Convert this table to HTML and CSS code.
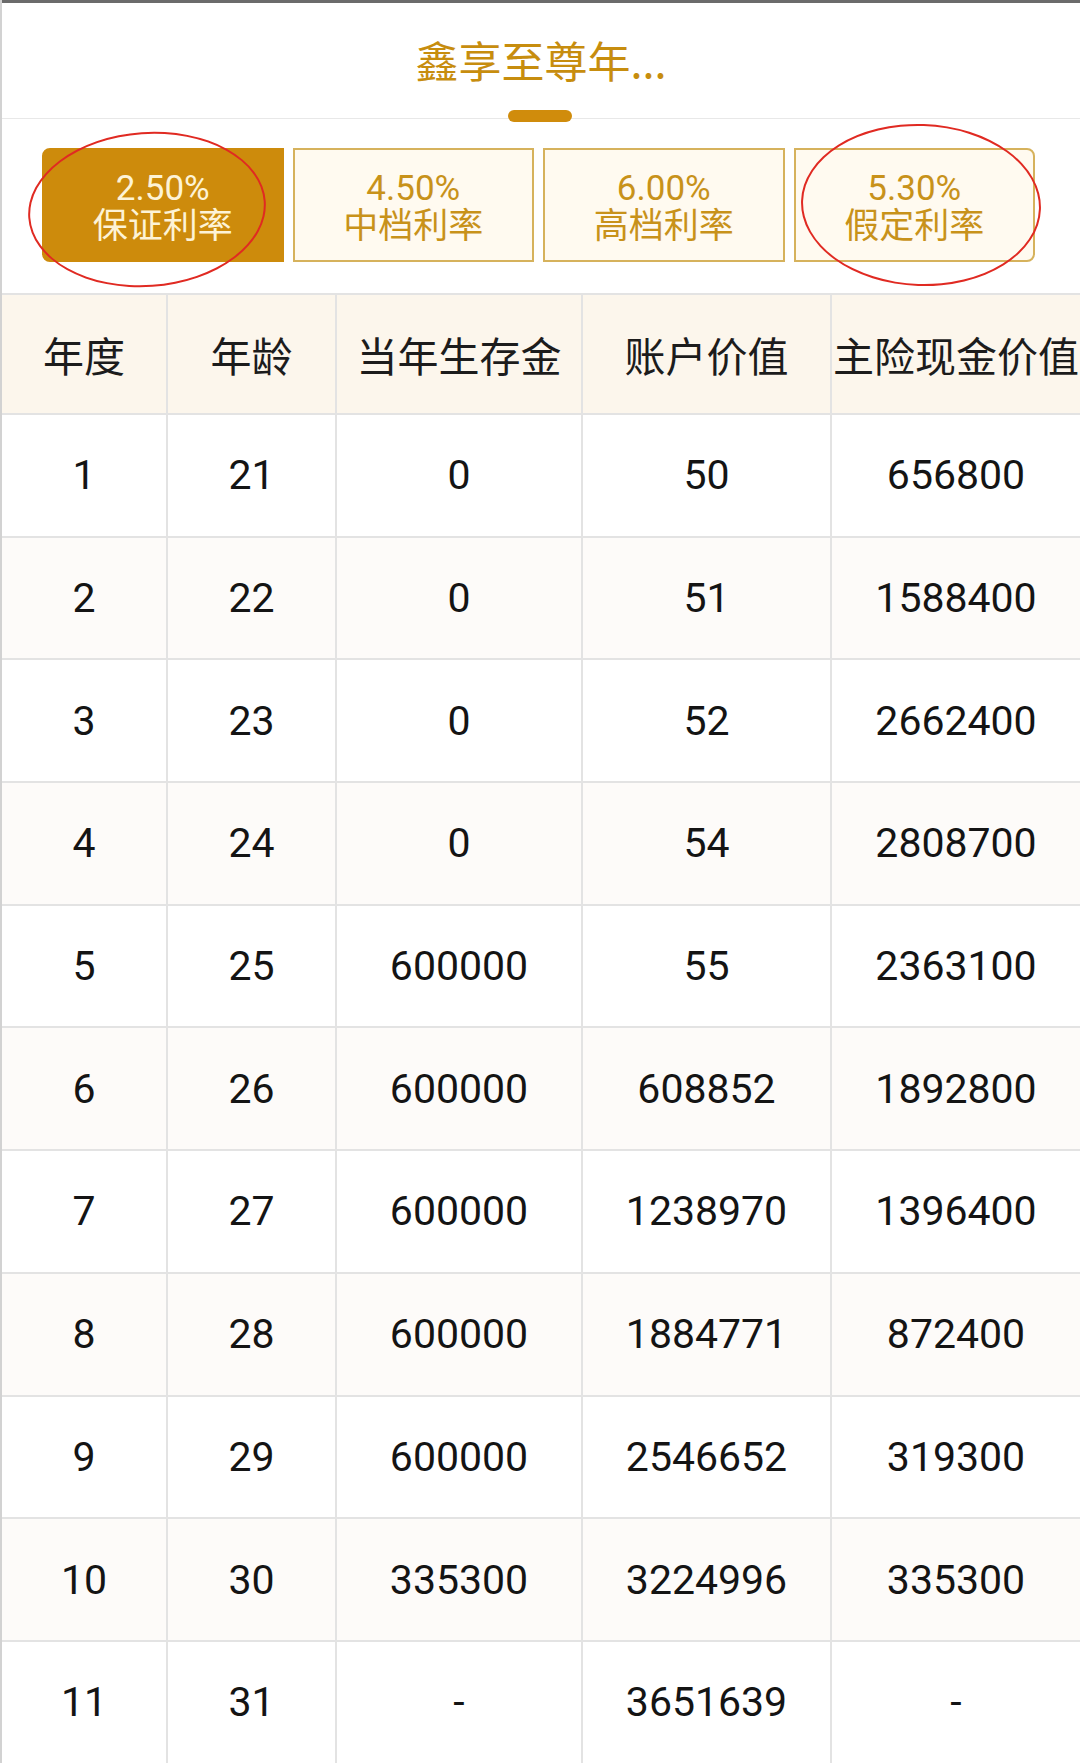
FILE: index.html
```html
<!DOCTYPE html>
<html lang="zh-CN">
<head>
<meta charset="utf-8">
<title>鑫享至尊年金</title>
<link rel="stylesheet" href="styles.css">
</head>
<body>
<div class="page">
  <div class="topbar"></div>
  <header class="head">
    <h1 class="title">鑫享至尊年...</h1>
    <span class="indicator"></span>
  </header>
  <section class="tabs">
    <div class="tab active"><span class="rate">2.50%</span><span class="label">保证利率</span></div>
    <div class="tab"><span class="rate">4.50%</span><span class="label">中档利率</span></div>
    <div class="tab"><span class="rate">6.00%</span><span class="label">高档利率</span></div>
    <div class="tab last"><span class="rate">5.30%</span><span class="label">假定利率</span></div>
    <span class="mark mark-1"></span>
    <span class="mark mark-2"></span>
  </section>
  <table class="grid">
    <colgroup>
      <col class="c1"><col class="c2"><col class="c3"><col class="c4"><col class="c5">
    </colgroup>
    <thead>
      <tr><th>年度</th><th>年龄</th><th>当年生存金</th><th>账户价值</th><th>主险现金价值</th></tr>
    </thead>
    <tbody>
      <tr><td>1</td><td>21</td><td>0</td><td>50</td><td>656800</td></tr>
      <tr><td>2</td><td>22</td><td>0</td><td>51</td><td>1588400</td></tr>
      <tr><td>3</td><td>23</td><td>0</td><td>52</td><td>2662400</td></tr>
      <tr><td>4</td><td>24</td><td>0</td><td>54</td><td>2808700</td></tr>
      <tr><td>5</td><td>25</td><td>600000</td><td>55</td><td>2363100</td></tr>
      <tr><td>6</td><td>26</td><td>600000</td><td>608852</td><td>1892800</td></tr>
      <tr><td>7</td><td>27</td><td>600000</td><td>1238970</td><td>1396400</td></tr>
      <tr><td>8</td><td>28</td><td>600000</td><td>1884771</td><td>872400</td></tr>
      <tr><td>9</td><td>29</td><td>600000</td><td>2546652</td><td>319300</td></tr>
      <tr><td>10</td><td>30</td><td>335300</td><td>3224996</td><td>335300</td></tr>
      <tr><td>11</td><td>31</td><td>-</td><td>3651639</td><td>-</td></tr>
    </tbody>
  </table>
</div>
</body>
</html>
```

FILE: styles.css
```css
html, body {
  margin: 0;
  padding: 0;
  background: #ffffff;
  overflow: hidden;
}

body {
  width: 1080px;
  height: 1763px;
  font-family: Roboto, "Noto Sans CJK SC", sans-serif;
}

.page {
  width: 1080px;
  box-sizing: border-box;
  border-left: 2px solid #d2d2d2;
}

.topbar {
  height: 3px;
  background: #6b6b6b;
}

.head {
  position: relative;
  height: 116px;
  box-sizing: border-box;
  padding-top: 30px;
  border-bottom: 1px solid #e8e8e8;
  text-align: center;
}

.title {
  margin: 0;
  font-family: "Noto Sans CJK SC", sans-serif;
  font-weight: 400;
  font-size: 43px;
  line-height: 52px;
  color: #c78d0e;
}

.indicator {
  position: absolute;
  left: 506px;
  bottom: -4px;
  width: 64px;
  height: 12px;
  border-radius: 6px;
  background: #d08c0c;
}

.tabs {
  position: relative;
  display: grid;
  grid-template-columns: repeat(4, 1fr);
  gap: 9px;
  padding: 29px 45px 31px 40px;
  height: 174px;
  box-sizing: border-box;
}

.tab {
  display: flex;
  flex-direction: column;
  align-items: center;
  justify-content: center;
  padding-top: 6px;
  box-sizing: border-box;
  background: #fffaf0;
  border: 2px solid #d6b25c;
  color: #c8921a;
  font-family: Roboto, "Noto Sans CJK SC", sans-serif;
  font-size: 35px;
  line-height: 38px;
}

.tab.active {
  background: #cd8b0c;
  border-color: #cd8b0c;
  color: #fdf3d6;
  border-radius: 8px 0 0 8px;
}

.tab.last {
  border-radius: 0 8px 8px 0;
}

.mark {
  position: absolute;
  border: 2px solid #e02a22;
  border-radius: 50%;
  box-sizing: border-box;
}

.mark-1 {
  left: 26px;
  top: 13px;
  width: 238px;
  height: 155px;
  transform: rotate(-4deg);
}

.mark-2 {
  left: 799px;
  top: 5px;
  width: 240px;
  height: 162px;
  transform: rotate(2deg);
}

.grid {
  width: 1078px;
  border-collapse: collapse;
  table-layout: fixed;
  color: #141414;
}

.c1 { width: 165px; }
.c2 { width: 169px; }
.c3 { width: 246px; }
.c4 { width: 249px; }
.c5 { width: 249px; }

.grid th,
.grid td {
  border: 2px solid #e3e3e3;
  padding: 0;
  text-align: center;
  white-space: nowrap;
  font-size: 41px;
}

.grid tr > :first-child {
  border-left: none;
}

.grid tr > :last-child {
  border-right: none;
}

.grid th {
  height: 118px;
  background: #fcf6ec;
  font-weight: 400;
  font-family: "Noto Sans CJK SC", sans-serif;
  color: #1c1c1c;
}

.grid td {
  height: 120.7px;
}

.grid tbody tr:nth-child(even) td {
  background: #fdfbf9;
}
```
